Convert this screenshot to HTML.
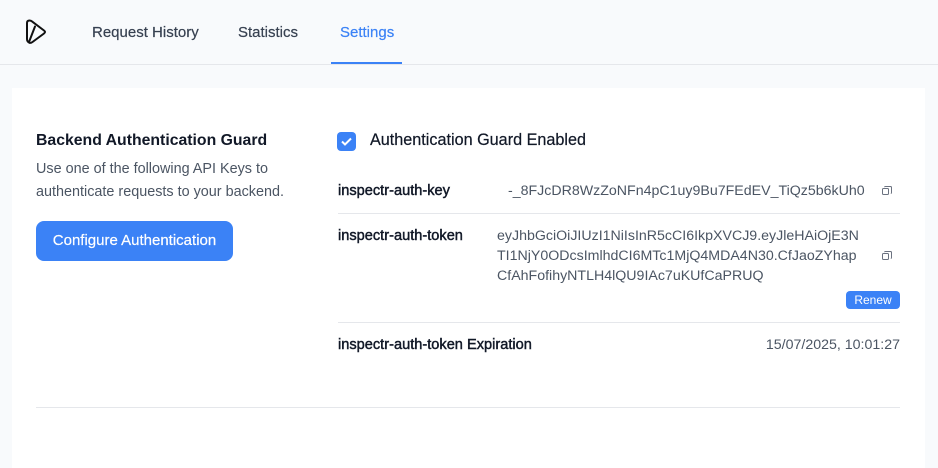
<!DOCTYPE html>
<html><head><style>
*{margin:0;padding:0;box-sizing:border-box}
body{width:938px;height:447px;background:#f8fafc;font-family:"Liberation Sans",sans-serif;color:#1f2937;position:relative;overflow:hidden}
.a{position:absolute;white-space:nowrap}
.nav{font-size:15px;color:#374151;top:24px;-webkit-text-stroke:0.2px #374151}
.card{position:absolute;left:12px;top:88px;width:913px;height:380px;background:#fff}
.lbl{font-size:14.6px;color:#111827;-webkit-text-stroke:0.45px #111827}
.val{font-size:14.2px;color:#4b5563}
.copy{position:absolute;width:7px;height:7px;border:1px solid #6b7280;border-radius:1.5px}
.copy:before{content:"";position:absolute;left:1px;top:-3px;width:7px;height:7px;border-top:1px solid #6b7280;border-right:1px solid #6b7280;border-radius:1.5px}
</style></head><body>
<div class="a" style="left:0;top:64px;width:938px;height:1px;background:#e5e7eb"></div>
<svg class="a" style="left:24px;top:19px" width="24" height="26" viewBox="0 0 24 26"><path d="M3 4Q3 1.5 5.5 1.5Q7 1.5 8.5 2.8L20 11.5Q22 13 20 14.5L8.5 23Q6.5 24.5 5 23.5Q3 22.5 3 20Z" fill="none" stroke="#111" stroke-width="2" stroke-linejoin="round"/><path d="M5 23L11 7.5" fill="none" stroke="#111" stroke-width="2" stroke-linecap="round"/></svg>
<div class="a nav" style="left:92px">Request History</div>
<div class="a nav" style="left:238px">Statistics</div>
<div class="a nav" style="left:340px;color:#3b82f6;-webkit-text-stroke:0.2px #3b82f6">Settings</div>
<div class="a" style="left:331px;top:62px;width:71px;height:2px;background:#3b82f6"></div>
<div class="card"></div>
<div class="a" style="left:36px;top:132px;font-size:15.8px;font-weight:bold;color:#111827">Backend Authentication Guard</div>
<div class="a" style="left:36px;top:158px;font-size:14.4px;line-height:23px;color:#4b5563">Use one of the following API Keys to<br>authenticate requests to your backend.</div>
<div class="a" style="left:36px;top:221px;width:197px;height:40px;background:#3b82f6;border-radius:8px;color:#fff;font-size:15px;text-align:center;line-height:40px;-webkit-text-stroke:0.2px #fff">Configure Authentication</div>
<div class="a" style="left:337px;top:132px;width:19px;height:19px;background:#3b82f6;border-radius:4px"><svg width="19" height="19"><path d="M5 9.5l3 3 6-6" stroke="#fff" stroke-width="2" fill="none"/></svg></div>
<div class="a" style="left:370px;top:131px;font-size:16.2px;color:#111827;-webkit-text-stroke:0.2px #111827">Authentication Guard Enabled</div>
<div class="a lbl" style="left:338px;top:183px">inspectr-auth-key</div>
<div class="a val" style="left:508px;top:183px">-_8FJcDR8WzZoNFn4pC1uy9Bu7FEdEV_TiQz5b6kUh0</div>
<div class="copy" style="left:882px;top:188px"></div>
<div class="a" style="left:338px;top:213px;width:562px;height:1px;background:#e5e7eb"></div>
<div class="a lbl" style="left:338px;top:228px">inspectr-auth-token</div>
<div class="a val" style="left:497px;top:226px;line-height:20px">eyJhbGciOiJIUzI1NiIsInR5cCI6IkpXVCJ9.eyJleHAiOjE3N<br>TI1NjY0ODcsImlhdCI6MTc1MjQ4MDA4N30.CfJaoZYhap<br>CfAhFofihyNTLH4lQU9IAc7uKUfCaPRUQ</div>
<div class="copy" style="left:882px;top:253px"></div>
<div class="a" style="left:846px;top:291px;width:54px;height:18px;background:#3b82f6;border-radius:4px;color:#fff;font-size:12px;text-align:center;line-height:18px">Renew</div>
<div class="a" style="left:338px;top:322px;width:562px;height:1px;background:#e5e7eb"></div>
<div class="a lbl" style="left:338px;top:337px">inspectr-auth-token Expiration</div>
<div class="a val" style="right:38px;top:337px">15/07/2025, 10:01:27</div>
<div class="a" style="left:36px;top:407px;width:864px;height:1px;background:#e5e7eb"></div>
</body></html>
